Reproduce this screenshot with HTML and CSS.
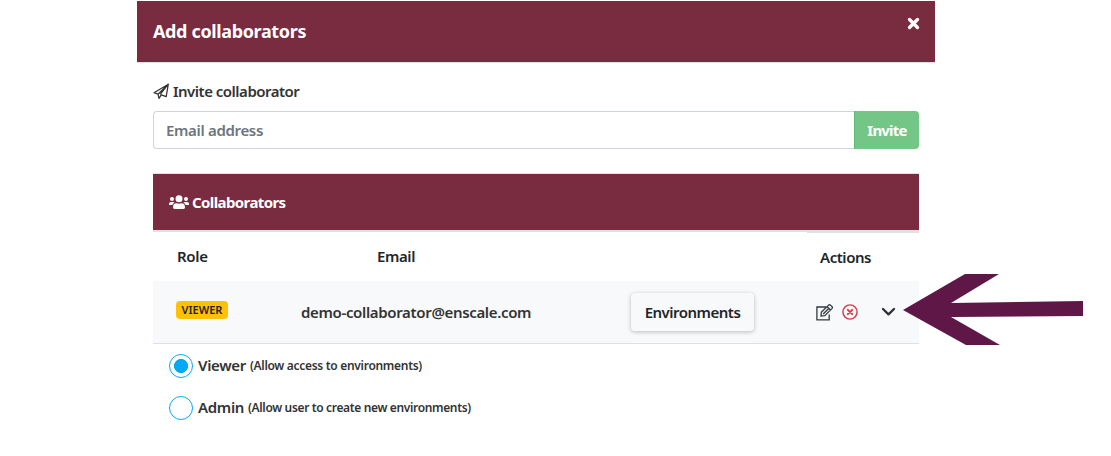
FILE: index.html
```html
<!DOCTYPE html>
<html lang="en">
<head>
<meta charset="utf-8">
<title>Add collaborators</title>
<link rel="stylesheet" href="styles.css">
</head>
<body>
<main class="modal">
  <header class="modal-header">
    <h1 class="modal-title">Add collaborators</h1>
    <button class="close" aria-label="Close"><svg width="13" height="13" viewBox="0 0 13 13"><path d="M2.5 2.5l8 8M10.5 2.5l-8 8" stroke="#fff" stroke-width="3.3" stroke-linecap="round"/></svg></button>
  </header>
  <div class="modal-body">
    <div class="invite-label">
      <svg width="17" height="17" viewBox="0 0 17 17" fill="none" stroke="#333" stroke-width="1.25" stroke-linejoin="round"><path d="M1 9.7L15.3 1.2 13.2 13.7 8.3 11.8 6 15.4 5 11.2zM5 11.2L15.3 1.2 7.2 11.3"/></svg>
      <span class="invite-text">Invite collaborator</span>
    </div>
    <div class="input-group">
      <div class="input"><span class="placeholder">Email address</span></div>
      <button class="invite-button"><span class="invite-caption">Invite</span></button>
    </div>
    <section class="panel">
      <div class="panel-header">
        <svg width="20" height="15" viewBox="0 0 20 15" fill="#fff"><circle cx="3" cy="4" r="2"/><circle cx="17" cy="4" r="2"/><circle cx="10" cy="3.7" r="3.5"/><path d="M0 10V8.8Q0 7 2 7H4Q5 7 5.5 7.7 3.7 8.5 3.4 10zM20 10V8.8Q20 7 18 7H16Q15 7 14.5 7.7 16.3 8.5 16.6 10zM4 12.6Q4 8.3 7.5 8.3 10 9.2 12.5 8.3 16 8.3 16 12.6 16 14 14.5 14H5.5Q4 14 4 12.6z"/></svg>
        <span class="panel-title">Collaborators</span>
      </div>
      <div class="row heading">
        <div class="role-heading"><span class="role-text">Role</span></div>
        <div class="email-heading"><span class="email-text">Email</span></div>
        <div class="actions-heading"><span class="actions-text">Actions</span></div>
      </div>
      <div class="row member">
        <div class="role"><span class="badge"><span class="badge-text">VIEWER</span></span></div>
        <div class="address"><span class="address-text">demo-collaborator@enscale.com</span></div>
        <button class="environments"><span class="environments-text">Environments</span></button>
        <div class="actions">
          <svg class="edit" width="18" height="17" viewBox="0 0 18 17" fill="none" stroke="#343a40" stroke-width="1.3"><path d="M10 3H.9V15.8H13.2V10.5M5.3 8.3L12.6 1.1Q13.5.3 14.4 1.1L16.1 2.8Q16.8 3.5 16.1 4.4L8.8 11.6 5 12.1zM11.2 2.7L14.5 6M7.2 10L12.7 4.5"/></svg>
          <svg class="remove" width="16" height="16" viewBox="0 0 16 16" fill="none" stroke="#dc3545"><circle cx="8" cy="8" r="7.1" stroke-width="1.4"/><path d="M5.8 5.8l4.4 4.4M10.2 5.8l-4.4 4.4" stroke-width="1.9" stroke-linecap="round"/></svg>
          <svg class="expand" width="15" height="10" viewBox="0 0 15 10" fill="none" stroke="#30343a" stroke-width="2.4" stroke-linecap="round" stroke-linejoin="round"><path d="M2 2l5.5 5.3L13 2"/></svg>
        </div>
      </div>
      <div class="options">
        <label class="option"><span class="radio selected"></span><span class="option-name viewer-name">Viewer</span><span class="hint viewer-hint">(Allow access to environments)</span></label>
        <label class="option"><span class="radio"></span><span class="option-name admin-name">Admin</span><span class="hint admin-hint">(Allow user to create new environments)</span></label>
      </div>
    </section>
  </div>
</main>
<svg class="pointer" width="182" height="74" viewBox="0 0 182 74"><path fill="#5f1747" d="M0 37L62 1H96L48 30 180 28V43L48 44 97 72H63z"/></svg>
</body>
</html>
```
FILE: styles.css
```css
* { box-sizing: border-box; }
body { margin: 0; background: #fff; color: #333; font: 600 15px/24px "Noto Sans", "Open Sans", sans-serif; }
button { font: inherit; border: 0; padding: 0; }
svg { display: block; flex: none; }
span { white-space: nowrap; }
.modal { width: 798px; margin: 1px 0 0 137px; }
.modal-header { height: 62px; display: flex; justify-content: space-between; padding: 18px 15px 0 16px; background: #792b40; border-bottom: 1px solid #dee2e6; color: #fff; }
.modal-title { margin: 0; font-size: 18px; font-weight: 700; line-height: 24px; letter-spacing: -.36px; }
.close { height: 13px; margin-top: -2px; background: none; }
.modal-body { padding: 16px 16px 0; }
.invite-label { display: flex; align-items: center; gap: 3px; height: 24px; }
.invite-text { letter-spacing: -.5px; }
.input-group { display: flex; height: 38px; margin-top: 8px; }
.input { flex: 1; padding: 6px 12px; border: 1px solid #ced4da; border-right: 0; border-radius: 4px 0 0 4px; color: #6c757d; }
.placeholder { letter-spacing: -.33px; }
.invite-button { width: 65px; background: #74c686; border-left: 1px solid #5db975; border-radius: 0 4px 4px 0; color: #fff; font-weight: 700; }
.invite-caption { letter-spacing: -.8px; }
.panel { margin-top: 24px; border-top: 1px solid #dee2e6; }
.panel-header { display: flex; align-items: center; gap: 3px; height: 56px; padding-left: 16px; background: #792b40; color: #fff; font-weight: 700; }
.panel-title { letter-spacing: -.6px; }
.row { display: flex; }
.heading { height: 51px; border-top: 2px solid #dee2e6; color: #212529; }
.role-heading { width: 224px; padding: 12px 0 0 24px; letter-spacing: -.3px; }
.email-heading { width: 430px; padding-top: 12px; letter-spacing: -.4px; }
.actions-heading { width: 112px; padding: 12px 0 0 13px; border-top: 1px solid #dee2e6; letter-spacing: -.45px; }
.member { height: 63px; align-items: center; background: #f8f9fb; border-bottom: 1px solid #dee2e6; }
.role { width: 148px; padding-left: 23px; }
.badge { display: flex; justify-content: center; width: 52px; height: 18px; margin-top: -5px; border-radius: 4px; background: #ffc107; color: #212529; font-size: 11px; line-height: 18px; }
.address { width: 330px; letter-spacing: -.34px; }
.environments { width: 123px; height: 38px; border-radius: 4px; background: #f8f9fa; color: #212529; letter-spacing: -.5px; box-shadow: 0 1px 4px rgba(0,0,0,.25); }
.actions { display: flex; align-items: center; margin-left: 62px; }
.remove { margin-left: 8px; }
.expand { margin-left: 23px; }
.options { display: grid; gap: 18px; padding: 10px 0 0 16px; }
.option { display: flex; align-items: center; height: 24px; }
.radio { width: 24px; height: 24px; border: 1px solid #03a9f4; border-radius: 50%; margin-right: 5px; }
.selected { background: radial-gradient(circle, #03a9f4 6.7px, #fff 7.3px); }
.option-name { margin-top: -3px; letter-spacing: -.33px; }
.hint { margin-left: 4px; font-size: 12px; letter-spacing: -.3px; }
.admin-hint { letter-spacing: -.35px; }
.pointer { position: absolute; left: 903px; top: 273px; }
```
